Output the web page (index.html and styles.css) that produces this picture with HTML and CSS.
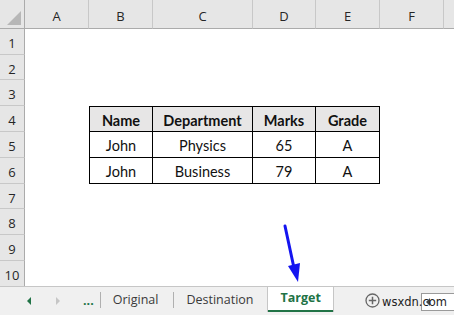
FILE: index.html
```html
<!DOCTYPE html>
<html lang="en">
<head>
    <meta charset="UTF-8">
    <title>Target sheet</title>
    <link rel="stylesheet" href="styles.css">
</head>
<body>
    <div class="window">
        <!-- Sheet grid -->
        <div class="sheet">
            <div class="corner"><span class="corner-mark"></span></div>
            <div class="col-head">A</div>
            <div class="col-head">B</div>
            <div class="col-head">C</div>
            <div class="col-head">D</div>
            <div class="col-head">E</div>
            <div class="col-head">F</div>
            <div class="col-head last"></div>

            <div class="row-head r1">1</div>
            <div class="row-head r2">2</div>
            <div class="row-head r3">3</div>
            <div class="row-head r4">4</div>
            <div class="row-head r5">5</div>
            <div class="row-head r6">6</div>
            <div class="row-head r7">7</div>
            <div class="row-head r8">8</div>
            <div class="row-head r9">9</div>
            <div class="row-head r10">10</div>

            <div class="cell th first top r4 cb">Name</div>
            <div class="cell th top r4 cc">Department</div>
            <div class="cell th top r4 cd">Marks</div>
            <div class="cell th top r4 ce">Grade</div>

            <div class="cell first r5 cb">John</div>
            <div class="cell r5 cc">Physics</div>
            <div class="cell r5 cd">65</div>
            <div class="cell r5 ce">A</div>

            <div class="cell first r6 cb">John</div>
            <div class="cell r6 cc">Business</div>
            <div class="cell r6 cd">79</div>
            <div class="cell r6 ce">A</div>
        </div>

        <!-- Sheet tabs -->
        <div class="tabbar">
            <span class="nav nav-prev"></span>
            <span class="nav nav-next"></span>
            <span class="dots">...</span>
            <span class="sep"></span>
            <span class="tab">Original</span>
            <span class="sep"></span>
            <span class="tab">Destination</span>
            <span class="tab active">Target</span>
            <span class="add">
                <svg width="15" height="15" viewBox="0 0 15 15">
                    <circle cx="7.5" cy="7.5" r="6.5" fill="none" stroke="#666" stroke-width="1.3"/>
                    <path d="M7.5 3.8v7.4M3.8 7.5h7.4" stroke="#666" stroke-width="1.5"/>
                </svg>
            </span>
            <span class="hscroll"><span class="hscroll-arrow"></span></span>
            <span class="watermark">wsxdn.com</span>
        </div>

        <svg class="arrow" width="30" height="64" viewBox="0 0 30 64">
            <path d="M3 2 L12 44" stroke="#1414f0" stroke-width="3" stroke-linecap="round"/>
            <path d="M6 42 L18 39 L16 58 Z" fill="#1414f0"/>
        </svg>
    </div>
</body>
</html>
```

FILE: styles.css
```css
* {
    margin: 0;
    padding: 0;
    box-sizing: border-box;
}

body {
    width: 454px;
    height: 315px;
    overflow: hidden;
    background: #fff;
    font-family: "Open Sans", "Noto Sans", sans-serif;
}

.window {
    position: relative;
    width: 454px;
    height: 315px;
    display: flex;
    flex-direction: column;
}

/* Sheet grid */
.sheet {
    display: grid;
    grid-template-columns: 25px 64px 64px 100px 63px 64px 64px 1fr;
    grid-template-rows: 29px 26px 25px 26px 26px 26px 26px 25px 26px 26px 25px;
    background: #fff;
}

.corner {
    background: #e6e6e6;
    border-right: 1px solid #ababab;
    border-bottom: 1px solid #ababab;
    position: relative;
}

.corner-mark {
    position: absolute;
    right: 3px;
    bottom: 3px;
    width: 0;
    height: 0;
    border-left: 14px solid transparent;
    border-bottom: 14px solid #b7b7b7;
}

.col-head {
    background: #e6e6e6;
    border-right: 1px solid #c8c8c8;
    border-bottom: 1px solid #ababab;
    color: #262626;
    font-size: 13px;
    display: flex;
    align-items: center;
    justify-content: center;
    padding-top: 3px;
}

.col-head.last {
    border-right: none;
}

.row-head {
    grid-column: 1;
    background: #e6e6e6;
    border-right: 1px solid #ababab;
    border-bottom: 1px solid #c8c8c8;
    color: #262626;
    font-size: 13px;
    display: flex;
    align-items: center;
    justify-content: center;
    padding-top: 3px;
}

.row-head.r10 {
    border-bottom: none;
}

.r1 { grid-row: 2; }
.r2 { grid-row: 3; }
.r3 { grid-row: 4; }
.r4 { grid-row: 5; }
.r5 { grid-row: 6; }
.r6 { grid-row: 7; }
.r7 { grid-row: 8; }
.r8 { grid-row: 9; }
.r9 { grid-row: 10; }
.r10 { grid-row: 11; }

.cb { grid-column: 3; }
.cc { grid-column: 4; }
.cd { grid-column: 5; }
.ce { grid-column: 6; }

/* Data table */
.cell {
    font-family: Lato, "Liberation Sans", sans-serif;
    font-size: 14.5px;
    color: #111;
    display: flex;
    align-items: center;
    justify-content: center;
    border-right: 1px solid #000;
    border-bottom: 1px solid #000;
    padding-top: 2px;
}

.cell.first {
    border-left: 1px solid #000;
}

.cell.top {
    border-top: 1px solid #000;
}

.cell.th {
    background: #e7e6e6;
    font-weight: 700;
}

/* Tab bar */
.tabbar {
    flex: 1;
    display: flex;
    align-items: stretch;
    background: #f0f0f0;
    border-top: 1px solid #c6c6c6;
    font-size: 12.5px;
    color: #3a3a3a;
    position: relative;
}

.nav {
    width: 0;
    height: 0;
    align-self: center;
    border-top: 4px solid transparent;
    border-bottom: 4px solid transparent;
}

.nav-prev {
    margin-left: 27px;
    border-right: 4px solid #217346;
}

.nav-next {
    margin-left: 25px;
    border-left: 4px solid #c6c6c6;
}

.dots {
    margin-left: 23px;
    color: #217346;
    font-weight: 700;
    font-size: 12.5px;
    align-self: center;
    padding-bottom: 2px;
}

.sep {
    width: 1px;
    background: #b0b0b0;
    margin: 5px 0 7px 0;
}

.dots + .sep {
    margin-left: 6px;
}

.tab {
    display: flex;
    align-items: center;
    padding: 0 15px 3px 12px;
}

.tab.active {
    background: #fff;
    color: #217346;
    font-weight: 700;
    padding: 0 12px 3px 12px;
    margin-bottom: 3px;
    border-bottom: 2px solid #217346;
    box-shadow: 1px 0 0 #c6c6c6, -1px 0 0 #c6c6c6;
}

.add {
    margin-left: 32px;
    display: flex;
    align-items: center;
    padding-bottom: 2px;
}

.hscroll {
    margin-left: auto;
    width: 33px;
    height: 18px;
    align-self: center;
    margin-top: 2px;
    border: 1px solid #9a9a9a;
    border-right: none;
    background: #fff;
    display: flex;
    align-items: center;
}

.hscroll-arrow {
    width: 0;
    height: 0;
    margin-left: 4px;
    border-top: 4px solid transparent;
    border-bottom: 4px solid transparent;
    border-right: 4px solid #444;
}

/* Watermark laid over the tab bar */
.watermark {
    position: absolute;
    left: 382px;
    top: 8px;
    font-family: "DejaVu Sans", sans-serif;
    font-size: 11.5px;
    color: #222;
}

/* Annotation arrow over the sheet */
.arrow {
    position: absolute;
    left: 282px;
    top: 224px;
}
```
